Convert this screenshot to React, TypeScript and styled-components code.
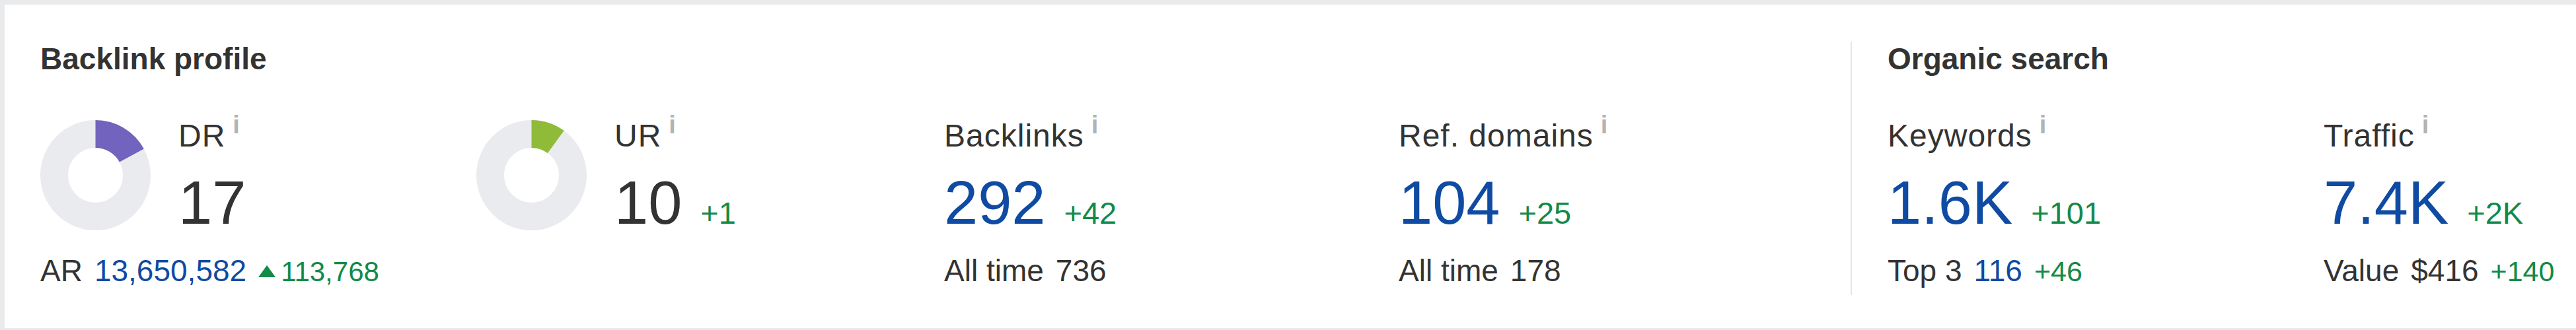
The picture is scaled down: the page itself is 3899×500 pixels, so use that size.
import * as React from "react";
import styled, { createGlobalStyle } from "styled-components";

const GlobalStyle = createGlobalStyle`
    html, body {
        margin: 0;
        padding: 0;
        background: #e9eaec;
    }
    body {
        font-family: "Liberation Sans", Arial, sans-serif;
        color: #333;
    }
`;

const BLUE = "#0f4aa3";
const DARK = "#333";
const GREEN = "#128a48";

const Page = styled.div`
    width: 3899px;
    box-sizing: border-box;
    padding: 7px 0 3px 7px;
`;

const Card = styled.div`
    display: flex;
    height: 490px;
    box-sizing: border-box;
    padding: 56px 0 50px;
    background: #fff;
`;

const Section = styled.section<{ $divided?: boolean; $width?: number }>`
    box-sizing: border-box;
    padding-left: 54px;
    flex: ${(p) => (p.$width ? `0 0 ${p.$width}px` : "1 1 auto")};
    border-left: ${(p) => (p.$divided ? "2px solid #e6e6e6" : "none")};
`;

const Heading = styled.h2`
    margin: 0;
    font-size: 46px;
    line-height: 52px;
    font-weight: bold;
    color: #333;
`;

const Metrics = styled.div<{ $columns: string }>`
    display: grid;
    grid-template-columns: ${(p) => p.$columns};
    margin-top: 63px;
`;

const Column = styled.div`
    display: flex;
    flex-direction: column;
    align-items: flex-start;
`;

const TopRow = styled.div`
    display: flex;
    align-items: flex-start;
    gap: 42px;
`;

const TextBlock = styled.div`
    display: flex;
    flex-direction: column;
`;

const Label = styled.div`
    font-size: 48px;
    line-height: 56px;
    letter-spacing: 1px;
    white-space: nowrap;
    color: #333;
`;

const InfoMark = styled.span`
    margin-left: 11px;
    font-size: 38px;
    font-weight: bold;
    line-height: 0;
    letter-spacing: 0;
    vertical-align: 20px;
    color: #b3b3b3;
`;

const ValueRow = styled.div`
    display: flex;
    align-items: baseline;
    margin-top: 23px;
    white-space: nowrap;
`;

const BigNumber = styled.span<{ $color: string }>`
    font-size: 92px;
    line-height: 100px;
    color: ${(p) => p.$color};
`;

const Delta = styled.span`
    margin-left: 28px;
    font-size: 47px;
    color: ${GREEN};
`;

const SubRow = styled.div`
    display: flex;
    align-items: baseline;
    gap: 18px;
    margin-top: 27px;
    font-size: 46px;
    line-height: 52px;
    white-space: nowrap;
`;

const SubPart = styled.span<{ $color: string; $small?: boolean }>`
    color: ${(p) => p.$color};
    font-size: ${(p) => (p.$small ? "43px" : "46px")};
`;

const Growth = styled.span`
    font-size: 42px;
    color: ${GREEN};
`;

const UpArrow = styled.span`
    display: inline-block;
    width: 0;
    height: 0;
    margin-right: 8px;
    border-left: 13.5px solid transparent;
    border-right: 13.5px solid transparent;
    border-bottom: 18px solid ${GREEN};
    vertical-align: 6px;
`;

const DonutSvg = styled.svg`
    flex: none;
    width: 167px;
    height: 167px;
    margin-top: 4px;
`;

type Part = { text: string; color: string; small?: boolean };

type MetricProps = {
    label: string;
    value: string;
    valueColor: string;
    delta?: string;
    sub?: Part[];
};

const Donut = ({ percent, color }: { percent: number; color: string }) => {
    const r = 62.5;
    const len = 2 * Math.PI * r;
    return (
        <DonutSvg viewBox="0 0 167 167">
            <circle cx="83.5" cy="83.5" r={r} fill="none" stroke="#eaebee" strokeWidth="42" />
            <circle
                cx="83.5"
                cy="83.5"
                r={r}
                fill="none"
                stroke={color}
                strokeWidth="42"
                strokeDasharray={`${(len * percent) / 100} ${len}`}
                transform="rotate(-90 83.5 83.5)"
            />
        </DonutSvg>
    );
};

const MetricHead = ({ label, value, valueColor, delta }: MetricProps) => (
    <TextBlock>
        <Label>
            {label}
            <InfoMark>i</InfoMark>
        </Label>
        <ValueRow>
            <BigNumber $color={valueColor}>{value}</BigNumber>
            {delta && <Delta>{delta}</Delta>}
        </ValueRow>
    </TextBlock>
);

const SubLine = ({ parts }: { parts: Part[] }) => (
    <SubRow>
        {parts.map((p, i) => (
            <SubPart key={i} $color={p.color} $small={p.small}>
                {p.text}
            </SubPart>
        ))}
    </SubRow>
);

const Metric = (props: MetricProps) => (
    <Column>
        <MetricHead {...props} />
        {props.sub && <SubLine parts={props.sub} />}
    </Column>
);

export default function App() {
    return (
        <>
            <GlobalStyle />
            <Page>
                <Card>
                    <Section $width={2794}>
                        <Heading>Backlink profile</Heading>
                        <Metrics $columns="660px 708px 688px 1fr">
                            <Column>
                                <TopRow>
                                    <Donut percent={17} color="#7163be" />
                                    <MetricHead label="DR" value="17" valueColor={DARK} />
                                </TopRow>
                                <SubRow>
                                    <SubPart $color={DARK}>AR</SubPart>
                                    <SubPart $color={BLUE}>13,650,582</SubPart>
                                    <Growth>
                                        <UpArrow />
                                        113,768
                                    </Growth>
                                </SubRow>
                            </Column>
                            <Column>
                                <TopRow>
                                    <Donut percent={10} color="#8fbb39" />
                                    <MetricHead label="UR" value="10" valueColor={DARK} delta="+1" />
                                </TopRow>
                            </Column>
                            <Metric
                                label="Backlinks"
                                value="292"
                                valueColor={BLUE}
                                delta="+42"
                                sub={[
                                    { text: "All time", color: DARK },
                                    { text: "736", color: DARK },
                                ]}
                            />
                            <Metric
                                label="Ref. domains"
                                value="104"
                                valueColor={BLUE}
                                delta="+25"
                                sub={[
                                    { text: "All time", color: DARK },
                                    { text: "178", color: DARK },
                                ]}
                            />
                        </Metrics>
                    </Section>
                    <Section $divided>
                        <Heading>Organic search</Heading>
                        <Metrics $columns="660px 1fr">
                            <Metric
                                label="Keywords"
                                value="1.6K"
                                valueColor={BLUE}
                                delta="+101"
                                sub={[
                                    { text: "Top 3", color: DARK },
                                    { text: "116", color: BLUE },
                                    { text: "+46", color: GREEN, small: true },
                                ]}
                            />
                            <Metric
                                label="Traffic"
                                value="7.4K"
                                valueColor={BLUE}
                                delta="+2K"
                                sub={[
                                    { text: "Value", color: DARK },
                                    { text: "$416", color: DARK },
                                    { text: "+140", color: GREEN, small: true },
                                ]}
                            />
                        </Metrics>
                    </Section>
                </Card>
            </Page>
        </>
    );
}
